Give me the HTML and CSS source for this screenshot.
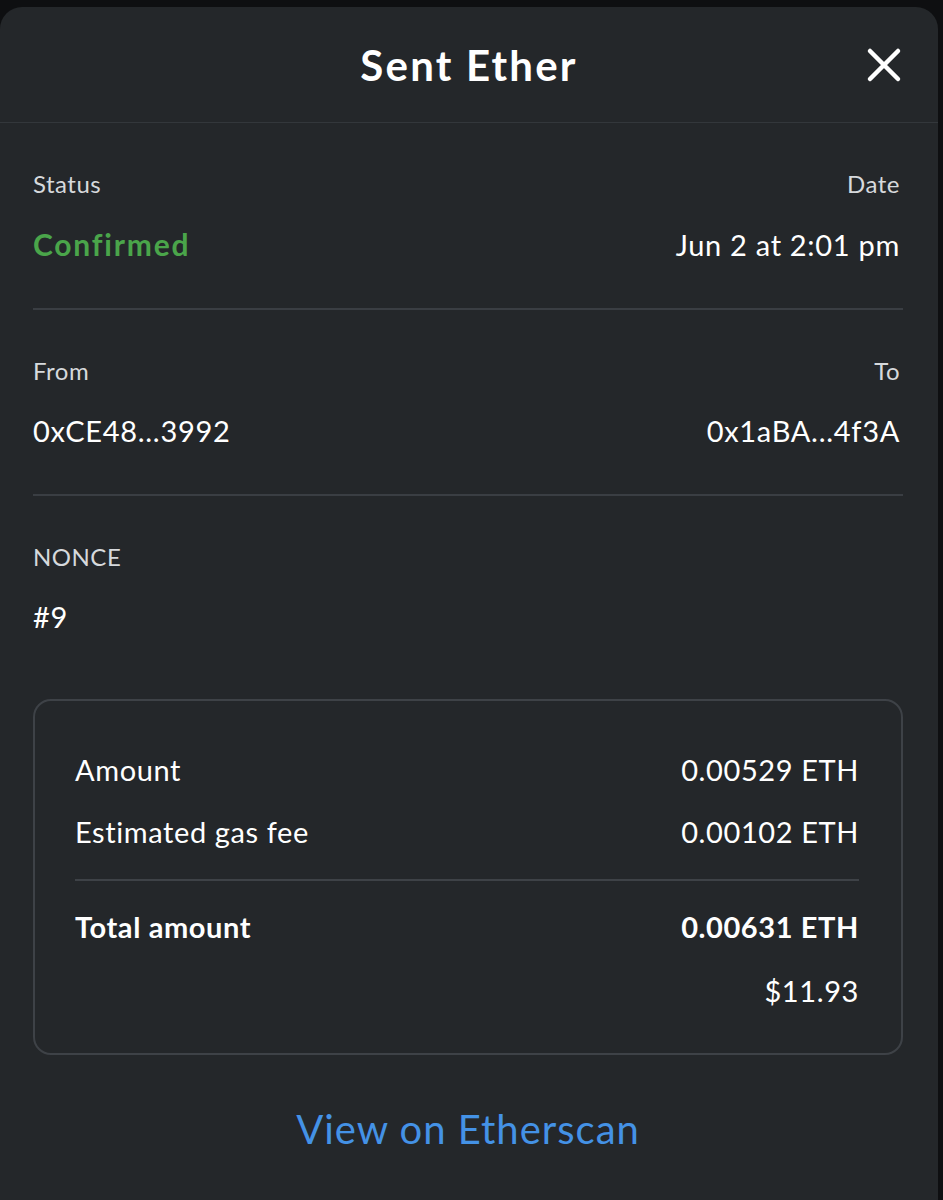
FILE: index.html
```html
<!DOCTYPE html>
<html lang="en">
<head>
    <meta charset="UTF-8">
    <meta name="viewport" content="width=device-width, initial-scale=1.0">
    <title>Sent Ether</title>
    <link rel="stylesheet" href="styles.css">
</head>
<body>
    <div class="modal">
        <div class="header">
            <div class="title">Sent Ether</div>
            <button class="close" aria-label="Close">
                <svg width="36" height="36" viewBox="0 0 36 36">
                    <path d="M4 4 L32 32 M32 4 L4 32" stroke="#ffffff" stroke-width="4.5" stroke-linecap="round" fill="none"/>
                </svg>
            </button>
        </div>
        <div class="content">
            <div class="section">
                <div class="row">
                    <div class="label">Status</div>
                    <div class="label">Date</div>
                </div>
                <div class="row values">
                    <div class="status">Confirmed</div>
                    <div class="value">Jun 2 at 2:01 pm</div>
                </div>
            </div>
            <div class="section">
                <div class="row">
                    <div class="label">From</div>
                    <div class="label">To</div>
                </div>
                <div class="row values">
                    <div class="value">0xCE48...3992</div>
                    <div class="value">0x1aBA...4f3A</div>
                </div>
            </div>
            <div class="section last">
                <div class="row">
                    <div class="label">NONCE</div>
                </div>
                <div class="row values">
                    <div class="value">#9</div>
                </div>
            </div>
            <div class="summary">
                <div class="line">
                    <span>Amount</span>
                    <span>0.00529 ETH</span>
                </div>
                <div class="line">
                    <span>Estimated gas fee</span>
                    <span>0.00102 ETH</span>
                </div>
                <div class="line total">
                    <span>Total amount</span>
                    <span>0.00631 ETH</span>
                </div>
                <div class="line fiat">
                    <span>$11.93</span>
                </div>
            </div>
            <a class="link" href="#">View on Etherscan</a>
        </div>
    </div>
</body>
</html>
```

FILE: styles.css
```css
body {
    margin: 0;
    background: #0e0f11;
    font-family: 'Lato', 'Noto Sans', sans-serif;
    color: #ffffff;
    height: 1200px;
    overflow: hidden;
}
.modal {
    margin-top: 7px;
    width: 938px;
    height: 1193px;
    background: #24272a;
    border-radius: 22px 22px 0 0;
}
.header {
    height: 115px;
    border-bottom: 1px solid #33373b;
    display: flex;
    align-items: center;
    justify-content: center;
    position: relative;
}
.title {
    font-size: 42px;
    font-weight: 700;
    letter-spacing: 2.2px;
}
.close {
    position: absolute;
    right: 36px;
    top: 40px;
    background: none;
    border: none;
    padding: 0;
    width: 36px;
    height: 36px;
}
.content {
    padding: 0 35px 0 33px;
}
.section {
    border-bottom: 2px solid #3a3e43;
    padding: 46px 0 46px;
}
.section.last {
    border-bottom: none;
    padding-bottom: 65px;
}
.row {
    display: flex;
    justify-content: space-between;
    align-items: baseline;
}
.values {
    margin-top: 28px;
}
.label {
    font-size: 24px;
    color: #d6d9dc;
    letter-spacing: 0.5px;
    margin-right: 3px;
}
.status {
    font-size: 30px;
    font-weight: 700;
    color: #4aa54a;
    letter-spacing: 1.8px;
}
.value {
    font-size: 29px;
    color: #ffffff;
    letter-spacing: 0.7px;
    margin-right: 3px;
}
.summary {
    border: 2px solid #3e4247;
    border-radius: 18px;
    padding: 50px 42px 43px 40px;
}
.line {
    display: flex;
    justify-content: space-between;
    font-size: 29px;
    color: #ffffff;
    line-height: 38px;
    margin-bottom: 24px;
    letter-spacing: 0.6px;
}
.total {
    border-top: 2px solid #3e4247;
    padding-top: 27px;
    margin-top: 28px;
    margin-bottom: 26px;
    font-weight: 700;
}
.fiat {
    justify-content: flex-end;
    margin-bottom: 0;
}
.link {
    display: block;
    text-align: center;
    margin-top: 50px;
    font-size: 40px;
    color: #4492e6;
    text-decoration: none;
    letter-spacing: 1px;
}
```
